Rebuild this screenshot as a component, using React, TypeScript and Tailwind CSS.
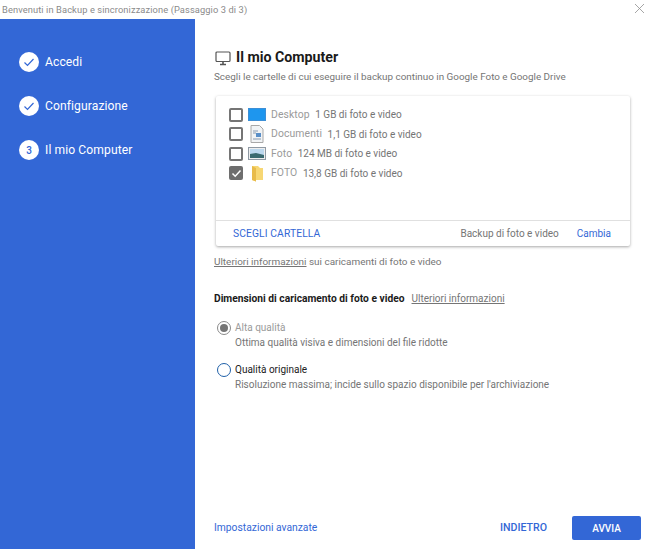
const font = { fontFamily: 'Roboto, sans-serif' };

function Step({ n, label }: { n?: number; label: string }) {
  return (
    <div className="flex items-center h-[20px] gap-[6px]">
      <div className="w-[20px] h-[20px] rounded-full bg-white flex items-center justify-center text-[#3367d6] text-[10px] font-medium">
        {n ? n : (
          <svg width="12" height="12" viewBox="0 0 12 12" fill="none" stroke="#3367d6" strokeWidth="1.2"><path d="M1.5 6.5 L4.5 9.5 L10.5 3" /></svg>
        )}
      </div>
      <span className="text-[12.1px] text-white tracking-[0.1px]">{label}</span>
    </div>
  );
}

function Row({ checked, icon, name, info }: { checked?: boolean; icon: React.ReactNode; name: string; info: string }) {
  return (
    <div className="flex items-center h-[19.5px]">
      <div className={`w-[14px] h-[14px] rounded-[2px] flex items-center justify-center shrink-0 ${checked ? 'bg-[#6e6e6e]' : 'border-[2px] border-[#757575]'}`}>
        {checked && <svg width="11" height="11" viewBox="0 0 11 11" fill="none" stroke="white" strokeWidth="1.5"><path d="M1.5 5.5 L4.2 8.2 L9.5 2.5" /></svg>}
      </div>
      <div className="w-[18px] h-[16px] ml-[5px] mr-[5px] flex items-center justify-center shrink-0">{icon}</div>
      <span className="text-[10.4px] text-[#9a9a9a] tracking-[0.1px] mr-[5.5px]">{name}</span>
      <span className="text-[10px] text-[#757575]">{info}</span>
    </div>
  );
}

export default function App() {
  return (
    <div className="w-[650px] h-[549px] bg-white flex flex-col overflow-hidden" style={font}>
      <div className="h-[19px] shrink-0 relative flex items-center pl-[2px] text-[9.3px] text-[#8a8a8a] tracking-[0.1px]">
        Benvenuti in Backup e sincronizzazione (Passaggio 3 di 3)
        <svg className="absolute left-[634px] top-[3px]" width="11" height="11" viewBox="0 0 11 11" stroke="#8f8f8f" strokeWidth="0.8"><path d="M1 1 L10 10 M10 1 L1 10" /></svg>
      </div>
      <div className="flex flex-1 min-h-0">
        <div className="w-[195px] shrink-0 bg-[#3367d6] pl-[19px] pt-[33px] flex flex-col gap-[24px]">
          <Step label="Accedi" />
          <Step label="Configurazione" />
          <Step n={3} label="Il mio Computer" />
        </div>
        <div className="flex-1 pl-[19px] pr-[20px] flex flex-col min-w-0">
          <div className="flex items-center gap-[5px] h-[20px] mt-[29px] pl-[1px]">
            <svg width="16" height="15" viewBox="0 0 16 15" fill="none" stroke="#555" strokeWidth="1.2"><rect x="1" y="1" width="14" height="9.5" rx="1" /><path d="M5 13.5 H11 M8 11 V13.5" strokeWidth="1.6" /></svg>
            <span className="text-[14.2px] font-bold text-[#1a1a1a]">Il mio Computer</span>
          </div>
          <div className="text-[9.87px] text-[#757575] mt-[1px] leading-[16px] whitespace-nowrap">Scegli le cartelle di cui eseguire il backup continuo in Google Foto e Google Drive</div>
          <div className="w-[414px] h-[150px] mt-[11px] ml-[2px] flex flex-col bg-white rounded-[2px] shadow-[0_1px_3px_rgba(0,0,0,0.35)]">
            <div className="flex-1 pl-[13px] pt-[9px]">
              <Row name="Desktop" info="1 GB di foto e video" icon={
                <svg width="18" height="13" viewBox="0 0 18 13"><rect width="18" height="13" fill="#3d8fd6" /><rect x="1" y="1" width="16" height="11" fill="#1e96ee" /></svg>
              } />
              <Row name="Documenti" info="1,1 GB di foto e video" icon={
                <svg width="14" height="18" viewBox="0 0 14 18"><path d="M1 .5 H9.5 L13 4 V17.5 H1 Z" fill="#f1f3f5" stroke="#a8a8a8" /><path d="M3 6 H8 M3 8 H6 M3 14 H11" stroke="#8a9bb0" /><path d="M6 8 H11 V12 H6 Z" fill="#5a8fc8" /></svg>
              } />
              <Row name="Foto" info="124 MB di foto e video" icon={
                <svg width="18" height="13" viewBox="0 0 18 13"><rect x=".5" y=".5" width="17" height="12" fill="#eee" stroke="#8f99a3" /><rect x="2" y="2" width="14" height="9" fill="#bcd8ee" /><path d="M2 7 L8 6 L16 8 V11 H2 Z" fill="#3a6a70" /></svg>
              } />
              <Row checked name="FOTO" info="13,8 GB di foto e video" icon={
                <svg width="13" height="17" viewBox="0 0 13 17"><path d="M1 1 H7 L9 3 H12 V15 H5 V16.5 L1 15 Z" fill="#f7d774" /><path d="M1 1 L5 3 V16.5 L1 15 Z" fill="#e8bb4a" /></svg>
              } />
            </div>
            <div className="h-[25px] border-t border-[#e0e0e0] flex items-center pl-[17px] pr-[19px] text-[10px] box-content">
              <span className="text-[#3367d6] text-[10.3px] tracking-[0.1px]">SCEGLI CARTELLA</span>
              <span className="ml-auto text-[#757575]">Backup di foto e video</span>
              <span className="ml-[18px] text-[#3367d6]">Cambia</span>
            </div>
          </div>
          <div className="text-[9.95px] text-[#757575] mt-[8px] leading-[16px]"><span className="underline">Ulteriori informazioni</span> sui caricamenti di foto e video</div>
          <div className="text-[10px] mt-[21px] leading-[16px] flex gap-[7px]">
            <span className="font-bold text-[10.25px] text-[#1a1a1a]">Dimensioni di caricamento di foto e video</span>
            <span className="underline text-[#757575]">Ulteriori informazioni</span>
          </div>
          <div className="mt-[13px] flex gap-[4px]">
            <div className="w-[14px] h-[14px] mt-[1px] rounded-full border-[1.5px] border-[#8a8a8a] flex items-center justify-center shrink-0 ml-[3px]"><div className="w-[8px] h-[8px] rounded-full bg-[#757575]" /></div>
            <div>
              <div className="text-[10px] leading-[15px] text-[#9a9a9a]">Alta qualità</div>
              <div className="text-[10px] leading-[15px] text-[#757575]">Ottima qualità visiva e dimensioni del file ridotte</div>
            </div>
          </div>
          <div className="mt-[12px] flex gap-[4px]">
            <div className="w-[14px] h-[14px] mt-[1px] rounded-full border-[1.5px] border-[#1e5fa8] shrink-0 ml-[3px]" />
            <div>
              <div className="text-[10px] leading-[15px] text-[#212121]">Qualità originale</div>
              <div className="text-[10px] leading-[15px] text-[#757575]">Risoluzione massima; incide sullo spazio disponibile per l'archiviazione</div>
            </div>
          </div>
          <div className="mt-auto mb-[9px] flex items-center h-[24px]">
            <span className="text-[10.3px] text-[#3367d6]">Impostazioni avanzate</span>
            <span className="ml-auto text-[10.6px] font-medium text-[#3367d6] mr-[25px]">INDIETRO</span>
            <div className="w-[69px] h-[24px] rounded-[2px] bg-[#3367d6] text-white text-[10px] font-medium flex items-center justify-center mr-[-11px]">AVVIA</div>
          </div>
        </div>
      </div>
    </div>
  );
}
